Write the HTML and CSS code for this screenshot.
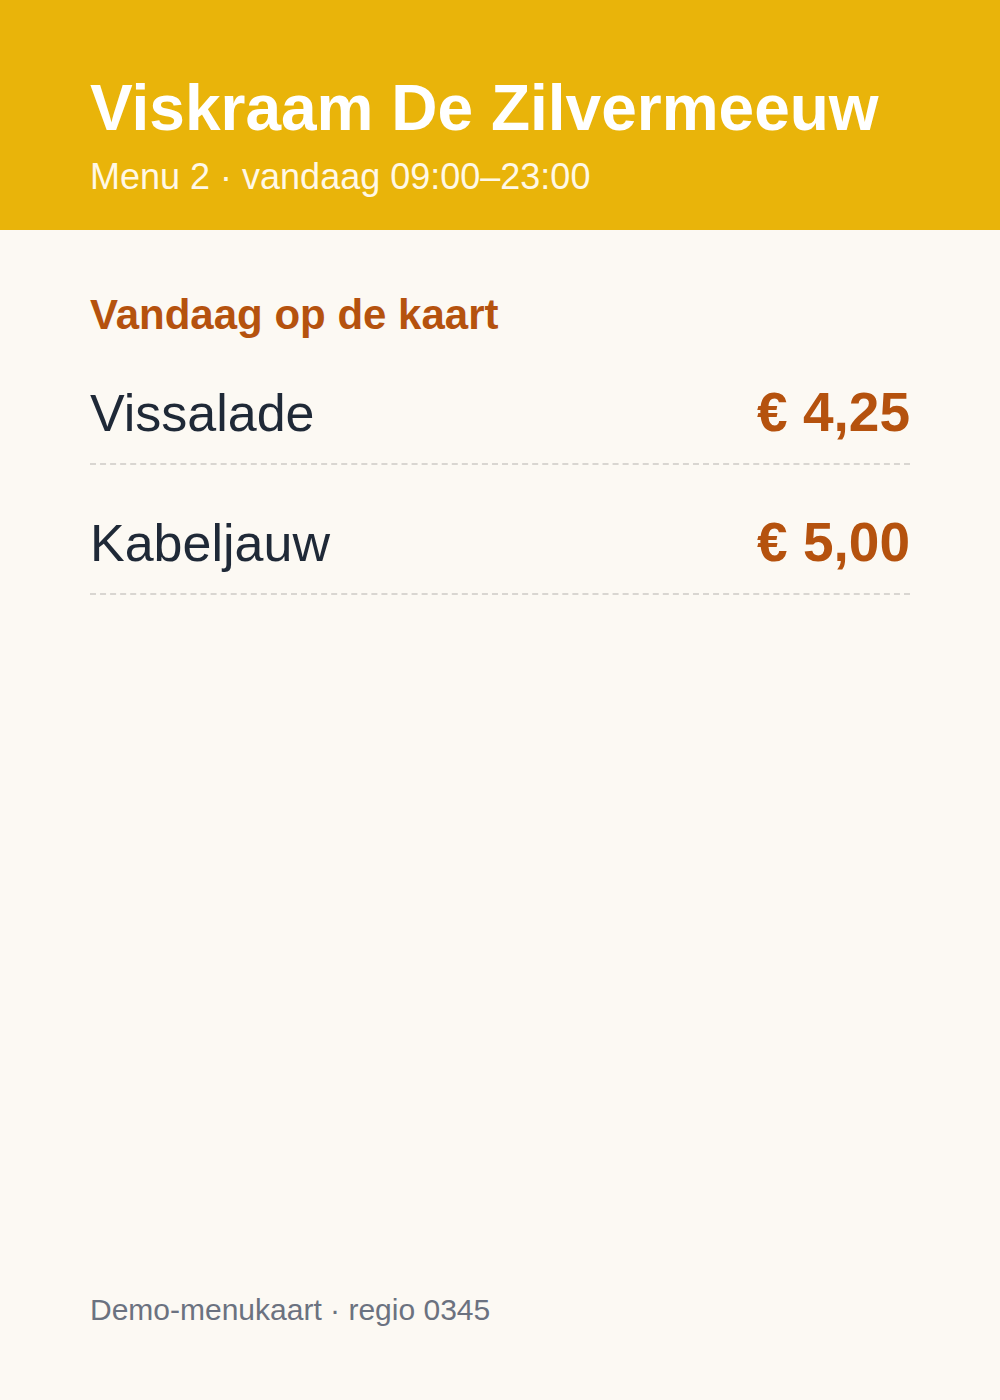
FILE: index.html
```html
<!DOCTYPE html>
<html lang="nl">
<head>
  <meta charset="UTF-8">
  <meta name="viewport" content="width=device-width, initial-scale=1.0">
  <title>Viskraam De Zilvermeeuw</title>
  <link rel="stylesheet" href="styles.css">
</head>
<body>
  <header class="top">
    <h1>Viskraam De Zilvermeeuw</h1>
    <div class="sub">Menu 2 · vandaag 09:00–23:00</div>
  </header>
  <main class="menu">
    <h2>Vandaag op de kaart</h2>
    <div class="items">
      <div class="item">
        <span class="name">Vissalade</span>
        <span class="price">€ 4,25</span>
      </div>
      <div class="item">
        <span class="name">Kabeljauw</span>
        <span class="price">€ 5,00</span>
      </div>
    </div>
  </main>
  <footer class="foot">Demo-menukaart · regio 0345</footer>
</body>
</html>
```

FILE: styles.css
```css
body {
  margin: 0;
  padding: 0;
  font-family: 'Liberation Sans', Arial, sans-serif;
  background: #fcf9f3;
  color: #1f2937;
  display: flex;
  flex-direction: column;
  min-height: 100vh;
}
.top {
  background: #e9b40a;
  padding: 70px 90px 29px;
}
.top h1 {
  margin: 0;
  font-size: 64px;
  line-height: 1.2;
  font-weight: 700;
  color: #ffffff;
}
.sub {
  margin-top: 7px;
  font-size: 36px;
  line-height: 1.3;
  color: #fff8e6;
}
.menu {
  flex: 1;
  padding: 60px 90px 0;
}
.menu h2 {
  margin: 0 0 19px;
  font-size: 42px;
  line-height: 1.2;
  font-weight: 700;
  color: #b5520e;
}
.items {
  display: flex;
  flex-direction: column;
  gap: 24px;
}
.item {
  display: flex;
  justify-content: space-between;
  align-items: baseline;
  padding: 20px 0 18px;
  border-bottom: 2px dashed #d9d6d1;
  line-height: 1.2;
}
.name {
  font-size: 52px;
}
.price {
  font-size: 55px;
  font-weight: 700;
  color: #b5520e;
}
.foot {
  padding: 0 90px 71px;
  font-size: 30px;
  line-height: 1.3;
  color: #6b7280;
}
```
